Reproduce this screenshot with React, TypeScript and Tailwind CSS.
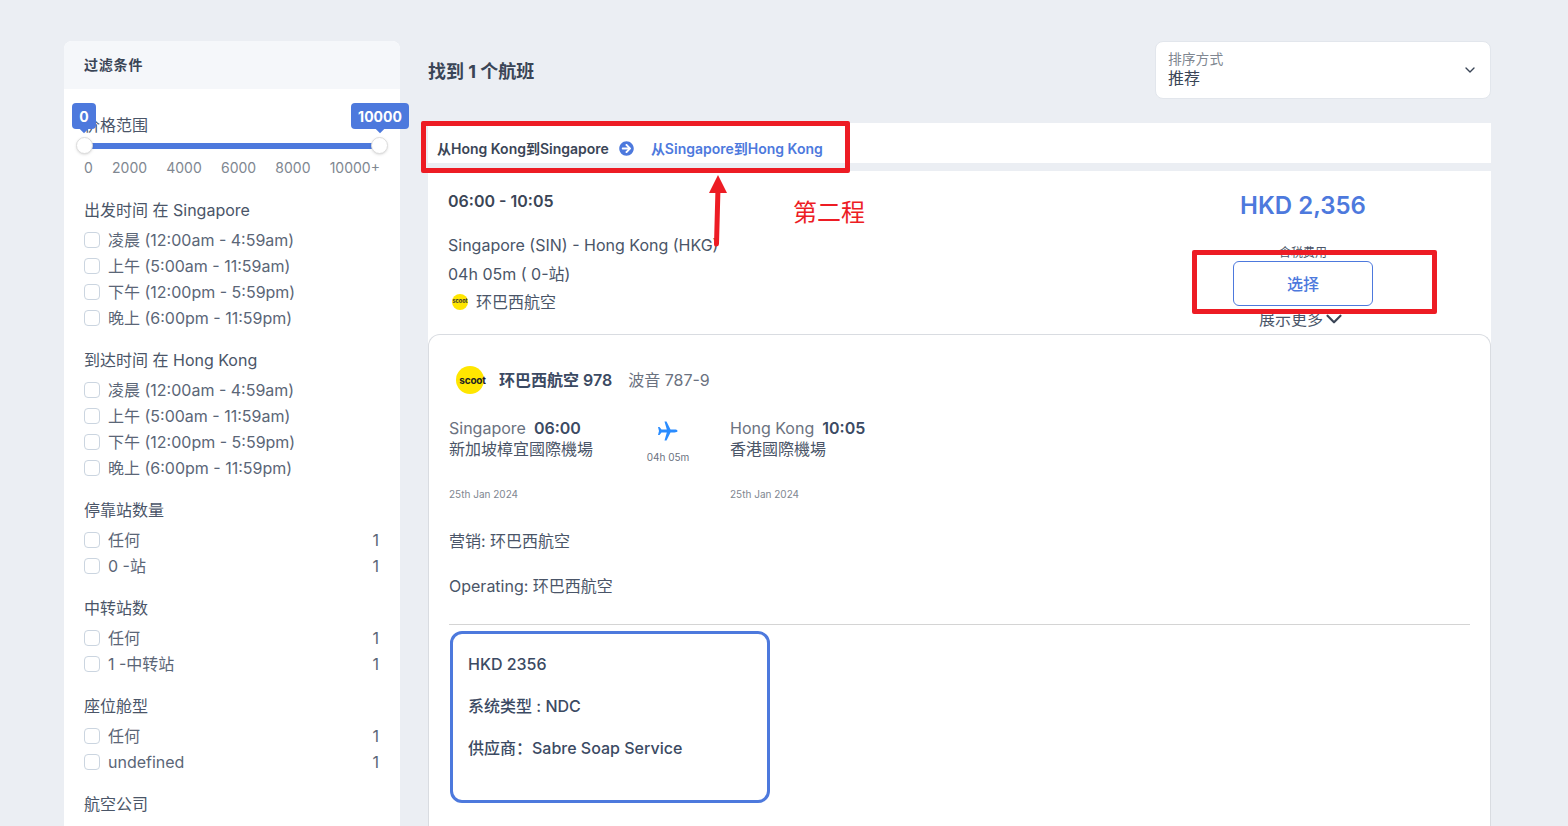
import React from "react";
import { ChevronDown } from "lucide-react";
import { FaArrowCircleRight } from "react-icons/fa";

const font = { fontFamily: '"Inter", "Noto Sans CJK SC", sans-serif' };

const departSlots = ["凌晨 (12:00am - 4:59am)", "上午 (5:00am - 11:59am)", "下午 (12:00pm - 5:59pm)", "晚上 (6:00pm - 11:59pm)"];

const groups = [
  { title: "出发时间 在 Singapore", items: departSlots.map((label) => ({ label, count: "" })) },
  { title: "到达时间 在 Hong Kong", items: departSlots.map((label) => ({ label, count: "" })) },
  { title: "停靠站数量", items: [{ label: "任何", count: "1" }, { label: "0 -站", count: "1" }] },
  { title: "中转站数", items: [{ label: "任何", count: "1" }, { label: "1 -中转站", count: "1" }] },
  { title: "座位舱型", items: [{ label: "任何", count: "1" }, { label: "undefined", count: "1" }] },
];

const FilterGroup = ({ title, items }: { title: string; items: { label: string; count: string }[] }) => (
  <div className="mb-[16px]">
    <p className="h-[26px] leading-[26px] mb-[4px]">{title}</p>
    {items.map((item) => (
      <div key={item.label} className="flex items-center justify-between h-[26px] text-[#5b6677]">
        <div className="flex items-center gap-[8px]">
          <span className="w-[16px] h-[16px] rounded-[4px] border border-[#cbd5e0] bg-white" />
          <span>{item.label}</span>
        </div>
        <span className="mr-[1px]">{item.count}</span>
      </div>
    ))}
  </div>
);

const ScootLogo = ({ big }: { big?: boolean }) =>
  big ? (
    <span className="w-[28px] h-[28px] rounded-full bg-[#ffe600] flex items-center justify-center">
      <span className="text-[10px] font-bold text-[#222] tracking-[-0.2px] ml-[5px]">scoot</span>
    </span>
  ) : (
    <span className="w-[16px] h-[16px] rounded-full bg-[#ffe600] flex items-center justify-center">
      <span className="text-[5.5px] font-bold text-[#333] leading-none">scoot</span>
    </span>
  );

const PriceBadge = ({ left, width, value }: { left: string; width: string; value: string }) => (
  <span
    className={`absolute top-[14px] h-[26px] rounded-[4px] bg-[#4d79dd] text-white text-[14px] font-bold flex items-center justify-center ${left} ${width}`}
  >
    {value}
    <span className="absolute bottom-[-3px] left-1/2 -ml-[3px] w-[6px] h-[6px] rotate-45 bg-[#4d79dd]" />
  </span>
);

const Sidebar = () => (
  <aside className="w-[336px] h-[900px] shrink-0 bg-white rounded-t-lg text-[#4a5568] text-[16px]">
    <div className="h-[48px] pb-[2px] bg-[#f5f7fa] rounded-t-lg flex items-center px-[20px] text-[14px] tracking-[0.8px] font-semibold text-[#3a4556]">过滤条件</div>
    <div className="relative px-[20px] pt-[23px]">
      <p className="h-[26px] leading-[26px]">价格范围</p>
      <div className="relative h-[6px] mt-[5px] bg-[#4d79dd]">
        <span className="absolute left-[-8px] top-[-6px] w-[17px] h-[17px] rounded-full bg-white border border-[#ddd] shadow" />
        <span className="absolute right-[-8px] top-[-6px] w-[17px] h-[17px] rounded-full bg-white border border-[#ddd] shadow" />
      </div>
      <div className="flex justify-between mt-[9px] h-[20px] text-[14px] leading-[20px] text-[#808791] mb-[19px]">
        <span>0</span><span>2000</span><span>4000</span><span>6000</span><span>8000</span><span>10000+</span>
      </div>
      <PriceBadge left="left-[8px]" width="w-[24px]" value="0" />
      <PriceBadge left="left-[287px]" width="w-[58px]" value="10000" />
      {groups.map((g) => (
        <FilterGroup key={g.title} title={g.title} items={g.items} />
      ))}
      <p className="h-[26px] leading-[26px]">航空公司</p>
    </div>
  </aside>
);

const Leg = ({ city, time, airport }: { city: string; time: string; airport: string }) => (
  <div>
    <p className="leading-[20px]">
      <span className="text-[#6b7280]">{city}</span>
      <span className="font-semibold text-[#3b4a63] ml-[8px]">{time}</span>
    </p>
    <p className="leading-[20px] mt-[1px]">{airport}</p>
    <p className="text-[10px] leading-[14px] text-[#808791] mt-[28px]">25th Jan 2024</p>
  </div>
);

const FlightCard = () => (
  <div className="bg-white mt-[8px] h-[700px]">
    <div className="relative h-[163px] px-[20px] text-[#4a5568]">
      <p className="pt-[20px] leading-[20px] font-semibold text-[#3a4556]">06:00 - 10:05</p>
      <p className="mt-[24px] leading-[20px]">Singapore (SIN) - Hong Kong (HKG)</p>
      <p className="mt-[9px] leading-[20px]">04h 05m ( 0-站)</p>
      <div className="flex items-center gap-[8px] mt-[8px] ml-[4px] leading-[20px]">
        <ScootLogo />
        <span>环巴西航空</span>
      </div>
      <div className="absolute left-[805px] top-[19px] w-[140px] flex flex-col items-center">
        <p className="text-[24px] leading-[32px] font-semibold text-[#4d79dd] whitespace-nowrap">HKD 2,356</p>
        <p className="text-[12px] leading-[16px] mt-[23px] text-[#4a5568]">含税费用</p>
        <button type="button" className="w-[140px] h-[45px] shrink-0 rounded-[6px] border border-[#4d79dd] text-[#4d79dd] font-medium bg-white">选择</button>
        <div className="flex items-center mt-[3px] h-[20px] leading-[20px] whitespace-nowrap">
          展示更多
          <ChevronDown size={26} strokeWidth={2} className="text-[#3a4556] -ml-[2px]" />
        </div>
      </div>
    </div>
    <div className="h-[540px] border border-[#d9dce1] border-b-0 rounded-t-xl px-[20px] pt-[31px] text-[#4a5568]">
      <div className="flex items-center h-[28px] ml-[7px]">
        <ScootLogo big />
        <span className="ml-[15px] font-semibold text-[#3b4a63]">环巴西航空 978</span>
        <span className="ml-[16px] text-[#6b7280]">波音 787-9</span>
      </div>
      <div className="flex mt-[24px]">
        <div className="w-[190px]"><Leg city="Singapore" time="06:00" airport="新加坡樟宜國際機場" /></div>
        <div className="w-[58px] mr-[33px] flex flex-col items-center pt-[3px]">
          <svg width="20" height="20" viewBox="0 0 20 20" className="text-[#2a8cff]">
            <path
              fill="currentColor"
              d="M19.5 10 C19.5 9 18 8.6 16.5 8.6 H12.5 L8.5 0.5 H6.5 L8.8 8.6 H3.5 L1.5 6 H0 L1 10 L0 14 H1.5 L3.5 11.4 H8.8 L6.5 19.5 H8.5 L12.5 11.4 H16.5 C18 11.4 19.5 11 19.5 10Z"
            />
          </svg>
          <span className="text-[10px] leading-[14px] mt-[9px] text-[#6b7280] whitespace-nowrap">04h 05m</span>
        </div>
        <Leg city="Hong Kong" time="10:05" airport="香港國際機場" />
      </div>
      <p className="mt-[30px] leading-[20px]">营销: 环巴西航空</p>
      <p className="mt-[25px] leading-[20px]">Operating: 环巴西航空</p>
      <div className="border-t border-[#d4d4d4] mt-[28px]" />
      <div className="w-[320px] h-[172px] mt-[6px] ml-[1px] border-[3px] border-[#4d79dd] rounded-xl px-[15px] pt-[18px] font-medium text-[#3b4a63]">
        <p className="leading-[24px]">HKD 2356</p>
        <p className="leading-[24px] mt-[18px]">系统类型 : NDC</p>
        <p className="leading-[24px] mt-[18px]">供应商：Sabre Soap Service</p>
      </div>
    </div>
  </div>
);

const Annotations = () => (
  <>
    <div className="absolute left-[421px] top-[121px] w-[429px] h-[52px] border-[5px] border-[#ed1c24] rounded-[2px]" />
    <div className="absolute left-[1192px] top-[250px] w-[245px] h-[64px] border-[5px] border-[#ed1c24] rounded-[2px]" />
    <svg className="absolute left-[700px] top-[170px]" width="36" height="80" viewBox="0 0 36 80">
      <path d="M16.5 74 L18 18" stroke="#ed1c24" strokeWidth="5" strokeLinecap="round" fill="none" />
      <path d="M18 5 L9 23 L27 23 Z" fill="#ed1c24" />
    </svg>
    <span className="absolute left-[793px] top-[195px] text-[24px] leading-[36px] text-[#ed1c24]">第二程</span>
  </>
);

const App: React.FC = () => {
  return (
    <div className="relative h-screen overflow-hidden bg-[#ebeef3]" style={font}>
      <div className="flex pt-[41px] pl-[64px] w-[1491px] gap-[28px]">
        <Sidebar />
        <main className="flex-1 min-w-0 text-[16px]">
          <div className="flex items-center justify-between h-[58px]">
            <h1 className="text-[18px] font-bold text-[#3a4556] mt-[2px]">找到 1 个航班</h1>
            <div className="w-[336px] h-[58px] bg-white rounded-lg border border-[#e2e6ec] px-[12px] flex items-center justify-between">
              <div>
                <p className="text-[13.8px] leading-[16px] text-[#808791]">排序方式</p>
                <p className="leading-[22px] text-[#3a4556]">推荐</p>
              </div>
              <ChevronDown size={16} className="text-[#3a4556]" />
            </div>
          </div>
          <div className="bg-white h-[40px] mt-[24px] flex items-center pl-[9px] pt-[10px] text-[14px] font-semibold text-[#3a4556]">
            <span>从Hong Kong到Singapore</span>
            <FaArrowCircleRight size={15} className="text-[#4d79dd] mx-[10px]" />
            <span className="text-[#4d79dd] ml-[7px]">从Singapore到Hong Kong</span>
          </div>
          <FlightCard />
        </main>
      </div>
      <Annotations />
    </div>
  );
};

export default App;
